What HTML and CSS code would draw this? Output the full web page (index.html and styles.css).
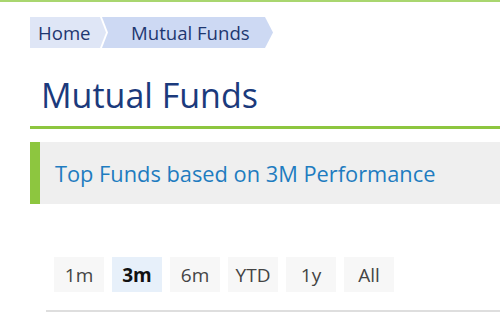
FILE: index.html
```html
<!DOCTYPE html>
<html>
<head>
<meta charset="utf-8">
<link rel="stylesheet" href="styles.css">
</head>
<body>
<div class="page">
  <nav class="breadcrumb">
    <span class="crumb-home-wrap"><a class="crumb crumb-home" href="#">Home</a></span>
    <a class="crumb crumb-current" href="#">Mutual Funds</a>
  </nav>
  <h1 class="title">Mutual Funds</h1>
  <div class="banner">Top Funds based on 3M Performance</div>
  <div class="tabs">
    <button class="tab">1m</button>
    <button class="tab active">3m</button>
    <button class="tab">6m</button>
    <button class="tab">YTD</button>
    <button class="tab">1y</button>
    <button class="tab">All</button>
  </div>
  <div class="rule"></div>
</div>
</body>
</html>
```

FILE: styles.css
```css
html, body {
  margin: 0;
  padding: 0;
  background: #fff;
}
body {
  font-family: "Open Sans", "Noto Sans", sans-serif;
  border-top: 2px solid #a9d66f;
  overflow: hidden;
}
.page {
  padding-left: 30px;
}
.breadcrumb {
  display: flex;
  height: 31px;
  margin-top: 15px;
}
.crumb {
  display: flex;
  align-items: center;
  font-size: 18.6px;
  color: #1e3770;
  text-decoration: none;
  height: 31px;
  box-sizing: border-box;
}
.crumb-home-wrap {
  position: relative;
  z-index: 2;
  background: #fff;
  width: 78px;
  height: 31px;
  clip-path: polygon(0 0, 72px 0, 78px 50%, 72px 100%, 0 100%);
}
.crumb-home {
  width: 76px;
  padding-left: 8px;
  background: #dfe6f6;
  clip-path: polygon(0 0, 70px 0, 76px 50%, 70px 100%, 0 100%);
}
.crumb-current {
  margin-left: -8px;
  padding-left: 31px;
  width: 173px;
  background: #cdd9f3;
  clip-path: polygon(0 0, 165px 0, 173px 50%, 165px 100%, 0 100%);
}
.title {
  margin: 25px 0 0;
  padding: 0 0 8px 11px;
  font-size: 34px;
  font-weight: 400;
  line-height: 45px;
  color: #1b3a7c;
  border-bottom: 3px solid #8dc63f;
}
.banner {
  margin-top: 13px;
  height: 62px;
  display: flex;
  align-items: center;
  padding-left: 15px;
  background: #efefef;
  border-left: 10px solid #8dc63f;
  font-size: 21.8px;
  color: #1e7cc0;
}
.tabs {
  display: flex;
  gap: 8px;
  margin: 53px 0 0 24px;
}
.tab {
  width: 50px;
  height: 35px;
  border: 0;
  padding: 0;
  background: #f7f7f7;
  font-family: "Open Sans", "Noto Sans", sans-serif;
  font-size: 19px;
  color: #444;
}
.tab.active {
  background: #e7f0fa;
  color: #111;
  font-weight: 700;
}
.rule {
  margin: 18px 0 0 16px;
  height: 2px;
  background: #dedede;
}
```
